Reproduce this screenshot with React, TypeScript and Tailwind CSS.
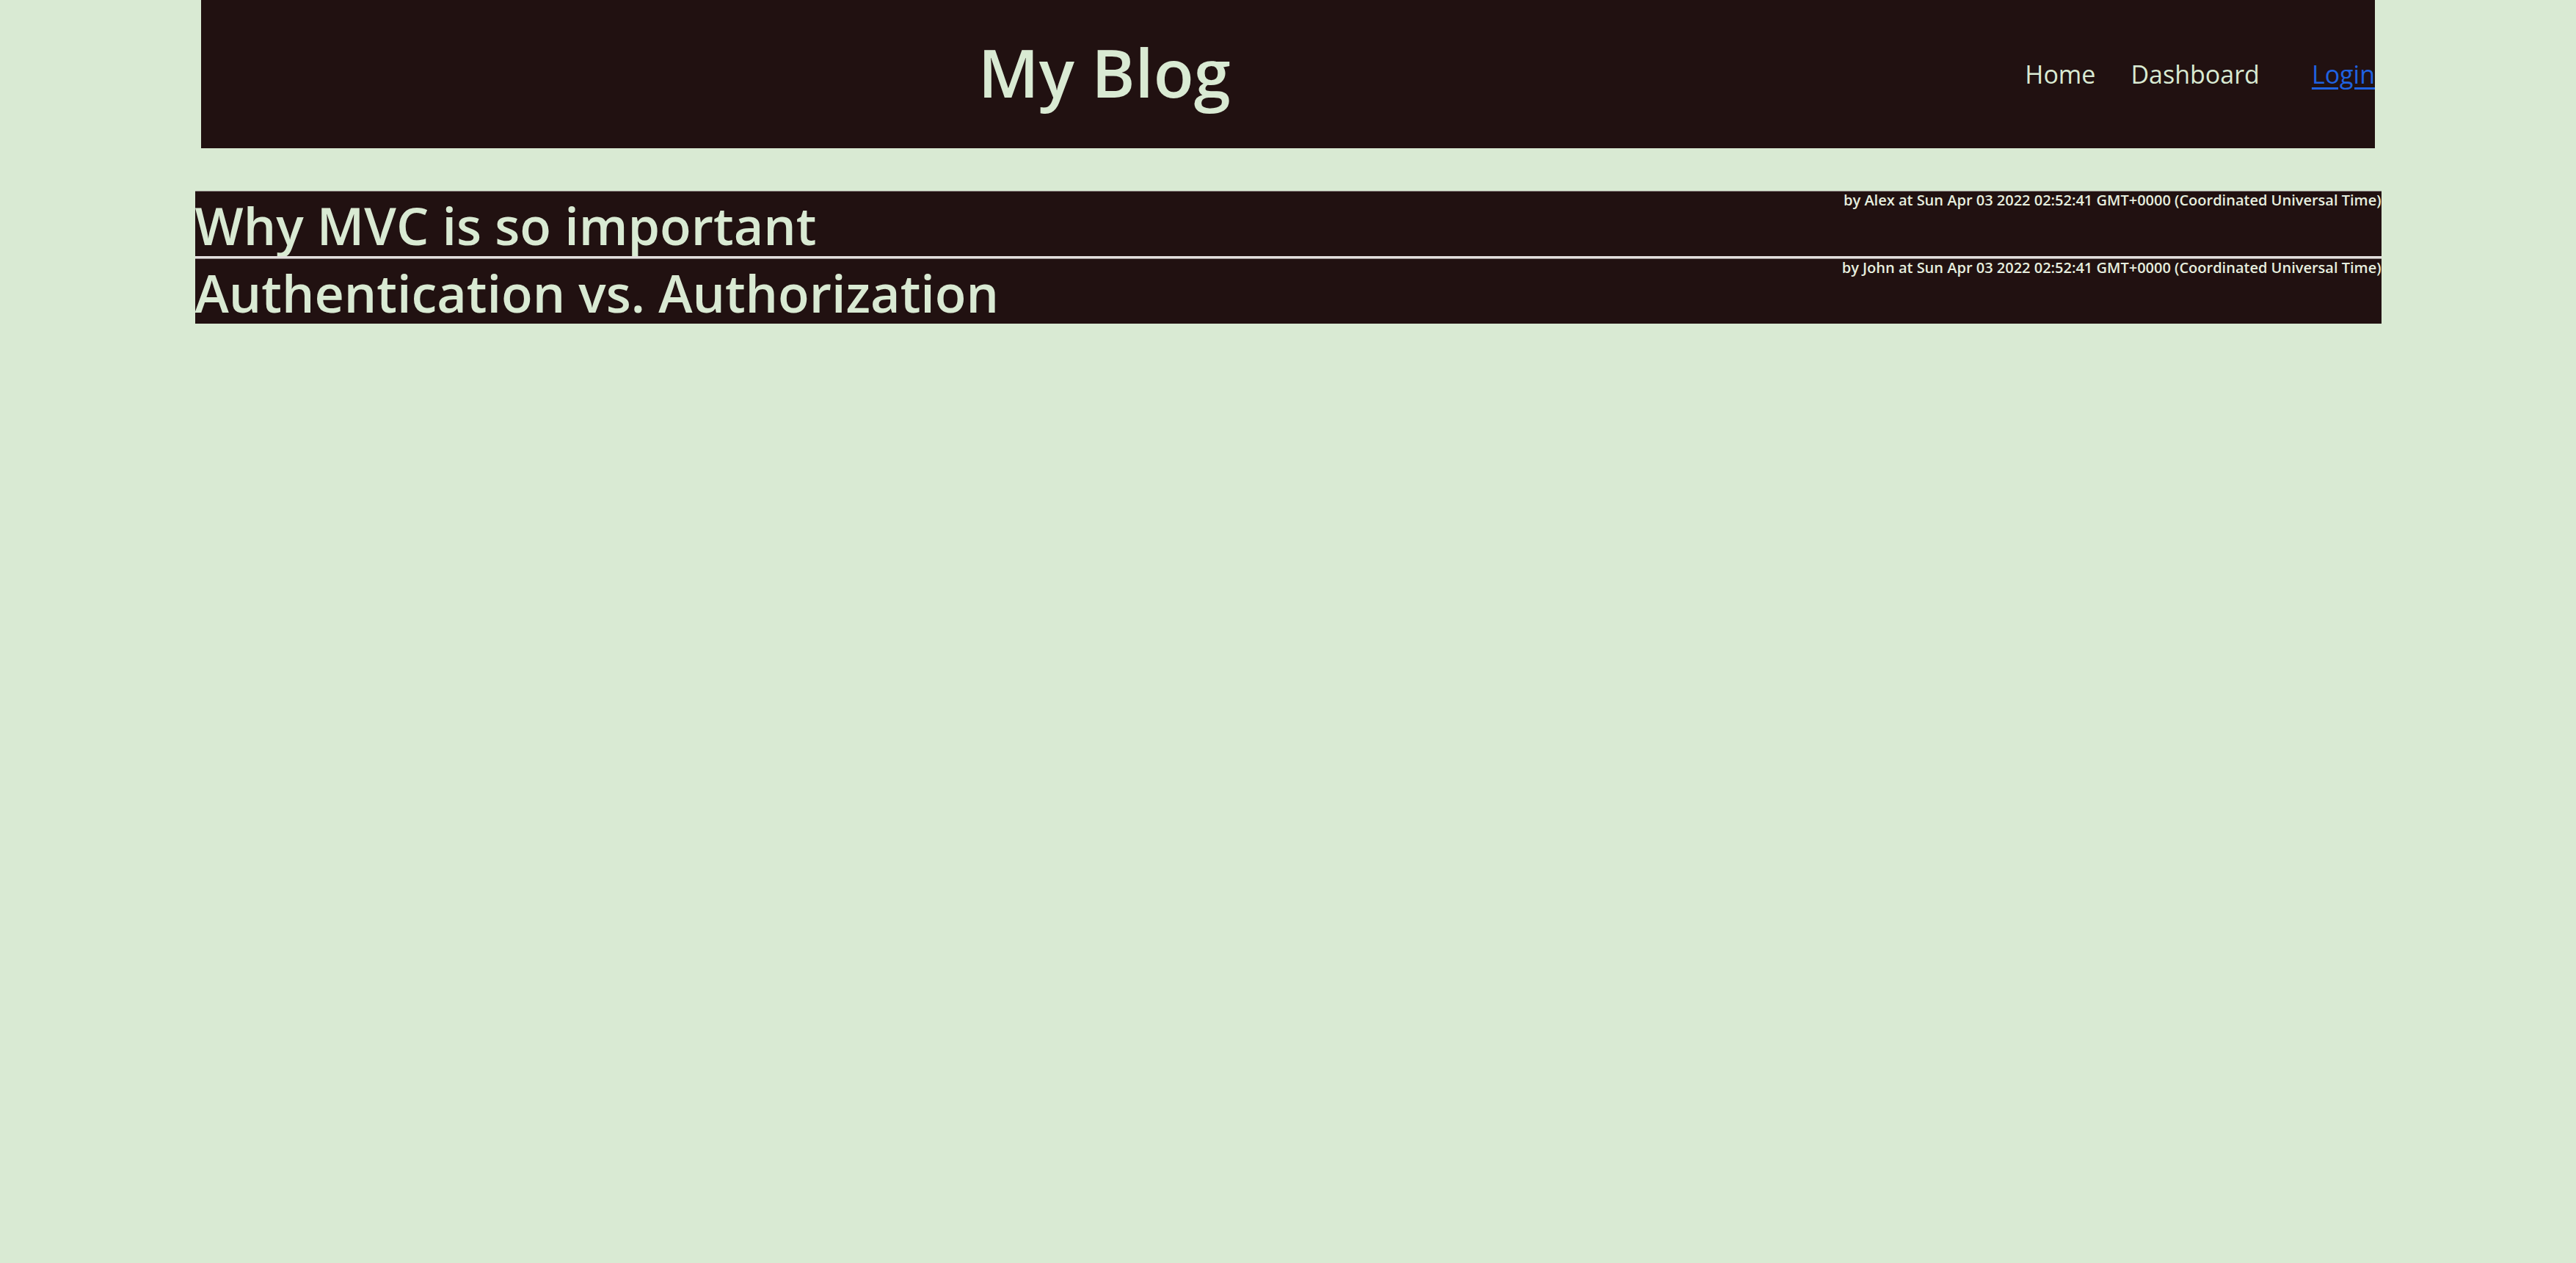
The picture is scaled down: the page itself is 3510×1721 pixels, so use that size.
import React from 'react';

const posts = [
  {
    title: 'Why MVC is so important',
    author: 'Alex',
    date: 'Sun Apr 03 2022 02:52:41 GMT+0000 (Coordinated Universal Time)',
  },
  {
    title: 'Authentication vs. Authorization',
    author: 'John',
    date: 'Sun Apr 03 2022 02:52:41 GMT+0000 (Coordinated Universal Time)',
  },
];

export default function App() {
  return (
    <div className="min-h-screen bg-[#d9ead3] text-[#d9ead3] font-['Open_Sans',sans-serif]">
      <header className="w-[2962px] h-[202px] mx-auto bg-[#211111] flex items-center">
        <h1 className="flex-1 text-center text-[90px] font-semibold leading-none pb-[6px]">My Blog</h1>
        <nav className="flex items-center pl-[24px] text-[34px]">
          <a href="#" className="mr-[48px]">Home</a>
          <a href="#" className="mr-[71px]">Dashboard</a>
          <a href="#" className="text-[#1f62e0] underline underline-offset-[5px] decoration-[3px]">Login</a>
        </nav>
      </header>

      <main className="w-[2979px] mx-auto mt-[58px] flex flex-col">
        {posts.map((post, i) => (
          <div key={post.title}>
            {i > 0 && <div className="h-[3px] bg-[#e3dfde]" />}
            <div className="h-[89px] bg-[#211111] border-t border-[#8c8483] flex flex-col">
              <p className="text-right text-[20px] font-semibold leading-[24px] text-[#e6eedf]">
                by {post.author} at {post.date}
              </p>
              <h2 className="text-[70px] font-semibold leading-[44px]">{post.title}</h2>
            </div>
          </div>
        ))}
      </main>
    </div>
  );
}
